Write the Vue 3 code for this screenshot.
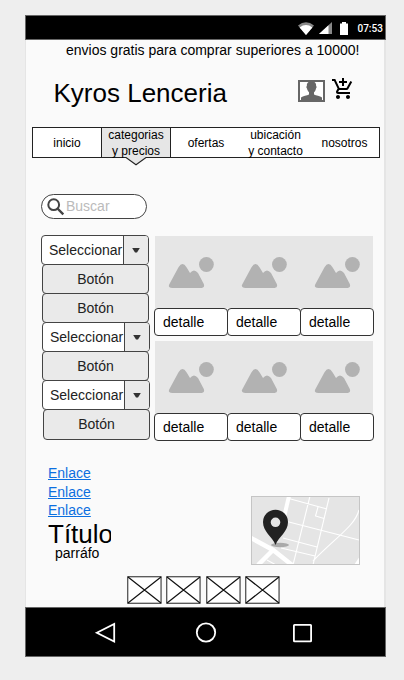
<script setup>
const nav = [
  { lines: ['inicio'] },
  { lines: ['categorias', 'y precios'], active: true },
  { lines: ['ofertas'] },
  { lines: ['ubicación', 'y contacto'] },
  { lines: ['nosotros'] },
]
const filters = ['select', 'button', 'button', 'select', 'button', 'select', 'button']
const links = ['Enlace', 'Enlace', 'Enlace']
</script>

<template>
  <main class="phone">
    <div class="status">
      <svg class="wifi" width="16" height="13" viewBox="0 0 16 13">
        <path d="M0 3.6Q8-3 16 3.6L8 13Z" fill="#888" />
        <path d="M1.6 5.4Q8 .6 14.4 5.4L8 13Z" fill="#fff" />
      </svg>
      <svg class="signal" width="13" height="12" viewBox="0 0 13 12">
        <path d="M0 12L13 0V12Z" fill="#888" />
        <path d="M0 12L9.5 3.2V12Z" fill="#fff" />
      </svg>
      <svg class="battery" width="8" height="13" viewBox="0 0 8 13">
        <path d="M0 1.6H2V0H6V1.6H8V13H0Z" fill="#fff" />
      </svg>
      <span class="time">07:53</span>
    </div>

    <p class="promo">envios gratis para comprar superiores a 10000!</p>

    <header class="header">
      <h1>Kyros Lenceria</h1>
      <svg class="user" width="27" height="22" viewBox="0 0 27 22">
        <rect x="1" y="1" width="25" height="20" fill="#fff" stroke="#666" stroke-width="2" />
        <path d="M3 20V17.5C5 15.7 9 15.8 11 14.5V12.2C9.6 11 9.3 9.5 9 8.4C8 7.8 8.4 6.2 8.9 6C8.5 2.9 10.5 1.5 13.5 1.5S18.5 2.9 18.1 6C18.8 6.4 18.8 7.8 18 8.4C17.7 9.8 17.3 11.2 16 12.2V14.5C18 15.8 22 15.7 24 17.5V20Z" fill="#666" />
      </svg>
      <svg class="cart" width="24" height="24" viewBox="0 0 24 24">
        <path d="M11 9h2V6h3V4h-3V1h-2v3H8v2h3v3zm-4 9c-1.1 0-1.99.9-1.99 2S5.9 22 7 22s2-.9 2-2-.9-2-2-2zm10 0c-1.1 0-1.99.9-1.99 2s.89 2 1.99 2 2-.9 2-2-.9-2-2-2zm-9.83-3.25l.03-.12.9-1.63h7.45c.75 0 1.41-.41 1.75-1.03l3.86-7.01L19.42 4h-.01l-1.1 2-2.76 5H8.53l-.13-.27L6.16 6l-.95-2-.94-2H1v2h2l3.6 7.59-1.35 2.45c-.16.28-.25.61-.25.96 0 1.1.9 2 2 2h12v-2H7.42c-.13 0-.25-.11-.25-.25z" />
      </svg>
    </header>

    <nav class="nav">
      <a v-for="(item, i) in nav" :key="i" :class="{ active: item.active }">
        <span v-for="line in item.lines" :key="line">{{ line }}</span>
        <svg v-if="item.active" class="pointer" width="22" height="9" viewBox="0 0 22 9">
          <path d="M0 0H22L11 7.5Z" fill="#e6e6e6" />
          <path d="M0 .5H1L11 7.7L21 .5H22" fill="none" stroke="#222" stroke-width="1.1" />
        </svg>
      </a>
    </nav>

    <div class="search">
      <svg width="18" height="18" viewBox="0 0 18 18" fill="none" stroke="#444">
        <circle cx="6.7" cy="6.7" r="5.4" stroke-width="2" />
        <path d="M10.5 10.5L16.3 16.3" stroke-width="2.4" />
      </svg>
      <span>Buscar</span>
    </div>

    <section class="catalog">
      <div class="filters">
        <template v-for="(kind, i) in filters" :key="i">
          <div v-if="kind === 'select'" class="select" :class="{ shifted: i > 0 }">
            <span class="value">Seleccionar</span>
            <span class="toggle">
              <svg width="8" height="5" viewBox="0 0 8 5"><path d="M.2 0H7.8L5 4.5H3Z" fill="#333" /></svg>
            </span>
          </div>
          <button v-else class="button" :class="{ last: i === 6 }">Botón</button>
        </template>
      </div>
      <div class="products">
        <article v-for="n in 6" :key="n">
          <div class="picture">
            <svg width="73" height="73" viewBox="0 0 73 73" fill="#b2b2b2">
              <circle cx="51.4" cy="28.5" r="7.4" />
              <path d="M14.2 48.5L23.5 31.2Q27.5 24.6 31.5 31.2L35 37Q39 32 43 37L48.8 48Q50.1 51.5 46.6 52H17.6Q12.6 51.6 14.2 48.5Z" />
            </svg>
          </div>
          <div class="detail">detalle</div>
        </article>
      </div>
    </section>

    <footer class="footer">
      <div class="info">
        <a v-for="(link, i) in links" :key="i" class="link">{{ link }}</a>
        <h2>Título</h2>
        <p>parráfo</p>
      </div>
      <svg class="map" width="109" height="69" viewBox="0 0 109 69">
        <rect width="109" height="69" fill="#e5e5e5" />
        <g fill="none" stroke="#fff" stroke-width="1.1">
          <path d="M36 2L76 13M78 2L62 69M67 11L64.5 20L73 22.5M34 25L108 44M59 0L42 69M32 42L66 51M30 52L64 60M62 65C84 42 104 30 108 14M16 64L25 69M24 56L39 69" />
          <path d="M38 0L31 30" stroke-width="4" />
          <path d="M0 42L22 54L41 69M22 54L7 69" stroke-width="4.5" />
        </g>
        <path d="M109 60L103 69H109Z" fill="#fff" />
        <ellipse cx="29" cy="49" rx="9" ry="2.2" fill="#aaa" />
        <path fill-rule="evenodd" d="M24.5 49C21 40 12 36 12 26A12.5 12.2 0 0 1 37 26C37 36 28 40 24.5 49ZM24.5 21.5A4.8 4.8 0 1 0 24.5 31.1A4.8 4.8 0 1 0 24.5 21.5Z" fill="#222" />
        <rect x=".5" y=".5" width="108" height="68" fill="none" stroke="#c5c5c5" />
      </svg>
    </footer>

    <div class="thumbs">
      <svg v-for="n in 4" :key="n" width="35" height="28" viewBox="0 0 35 28">
        <rect x=".75" y=".75" width="33.3" height="26.5" fill="#fff" stroke="#333" stroke-width="1.1" />
        <path d="M1 1L34 27M34 1L1 27" stroke="#111" stroke-width="1.2" />
      </svg>
    </div>

    <div class="system">
      <svg width="361" height="50" viewBox="0 0 361 50" fill="none" stroke="#fff" stroke-width="1.8">
        <path d="M71.8 25.8L89.2 17V34.6Z" />
        <circle cx="181" cy="25.5" r="9.2" />
        <rect x="268.9" y="17.9" width="17.2" height="16.4" rx=".6" />
      </svg>
    </div>
  </main>
</template>

<style>
body { background: #eee; }
</style>

<style scoped>
* { box-sizing: border-box; }
.phone {
  width: 361px;
  height: 642px;
  margin: 15px 0 23px 25px;
  display: flex;
  flex-direction: column;
  background: linear-gradient(90deg, #e5e5e5 1px, #fafafa 1px, #fafafa 359px, #e5e5e5 359px);
  font-family: "Liberation Sans", Arial, sans-serif;
  color: #000;
}
.phone > * { flex-shrink: 0; }
h1, h2, p { margin: 0; font-weight: 400; }
svg { display: block; flex-shrink: 0; }
.status {
  height: 25px;
  display: flex;
  align-items: center;
  justify-content: flex-end;
  padding: 1px 1px 0 0;
  background: #000;
  border: 1px solid #666;
}
.wifi { margin-right: 5px; }
.signal { margin-right: 8px; }
.battery { margin-right: 9.5px; }
.time { width: 26.5px; padding-top: 1px; font: 500 10px/12px Roboto, sans-serif; color: #fff; white-space: nowrap; }
.promo { height: 22px; padding-left: 41px; font-size: 14px; line-height: 20px; white-space: nowrap; }
.header { height: 65px; display: flex; padding-left: 28.5px; }
h1 { width: 244.5px; font-size: 26px; line-height: 32px; padding-top: 15px; white-space: nowrap; }
.user { margin-top: 18px; }
.cart { margin: 15px 0 0 6px; }
.nav {
  width: 348px;
  height: 31px;
  margin-left: 7px;
  display: grid;
  grid-template-columns: 68px 70px 70px 69px 69px;
  grid-template-rows: 29px;
  background: #fff;
  border: 1px solid #222;
}
.nav a {
  position: relative;
  display: flex;
  flex-direction: column;
  justify-content: center;
  align-items: center;
  font-size: 12px;
  line-height: 16px;
  white-space: nowrap;
}
.nav .active { background: #e6e6e6; border: solid #222; border-width: 0 1px; }
.nav span { position: relative; z-index: 1; }
.pointer { position: absolute; left: 23px; top: 29px; }
.search {
  width: 106px;
  height: 25px;
  margin: 36px 0 0 16px;
  padding-left: 5px;
  display: flex;
  align-items: center;
  gap: 1px;
  border: 1px solid #444;
  border-radius: 13px;
  background: #fff;
  font-size: 14px;
  color: #bbb;
}
.search span { line-height: 20px; padding-bottom: 1px; }
.catalog { height: 206px; margin: 16px 0 0 16px; display: flex; }
.filters { width: 109px; display: flex; flex-direction: column; }
.select, .button {
  width: 108px;
  height: 30px;
  margin-bottom: -1px;
  border: 1px solid #444;
  border-radius: 4px;
  font: 14px/28px "Liberation Sans", Arial, sans-serif;
  color: #222;
}
.select { display: flex; flex-shrink: 0; background: #fff; overflow: hidden; }
.select.shifted { margin-left: 1px; }
.value { width: 81px; padding-left: 7px; overflow: hidden; white-space: nowrap; }
.toggle { flex: 1; display: flex; align-items: center; justify-content: center; background: #eaeaea; border-left: 1px solid #444; }
.button { width: 107px; margin-left: 1px; padding: 0; background: #eaeaea; text-align: center; flex-shrink: 0; }
.button.last { margin-left: 2px; height: 31px; line-height: 27px; }
.products { margin: 1px 0 0 4px; display: grid; grid-template-columns: repeat(3, 73px); grid-template-rows: 100px 100px; row-gap: 5px; height: 205px; }
.picture { width: 73px; height: 72px; margin-left: 1px; background: #e6e6e6; overflow: hidden; }
article:nth-child(3n) .picture { width: 72px; }
.detail {
  width: 74px;
  height: 28px;
  padding-left: 8px;
  border: 1px solid #333;
  border-radius: 4px;
  background: #fff;
  font-size: 14px;
  line-height: 26px;
}
.footer { height: 120px; padding: 23px 0 0 23px; display: flex; }
.info { width: 203px; }
.link { display: block; width: max-content; height: 18.5px; font-size: 14px; line-height: 18px; color: #0b6fe0; text-decoration: underline; }
h2 { width: 63px; height: 25px; margin-top: 2px; overflow: hidden; font-size: 26px; line-height: 25px; }
.info p { padding-left: 7px; font-size: 14px; line-height: 12px; }
.map { margin-top: 32px; }
.thumbs { height: 46px; display: flex; gap: 4.3px; padding: 15px 0 0 102px; }
.system { height: 50px; background: #000; border: 1px solid #666; overflow: hidden; }
.system svg { margin: -1px 0 0 -1px; }
</style>
